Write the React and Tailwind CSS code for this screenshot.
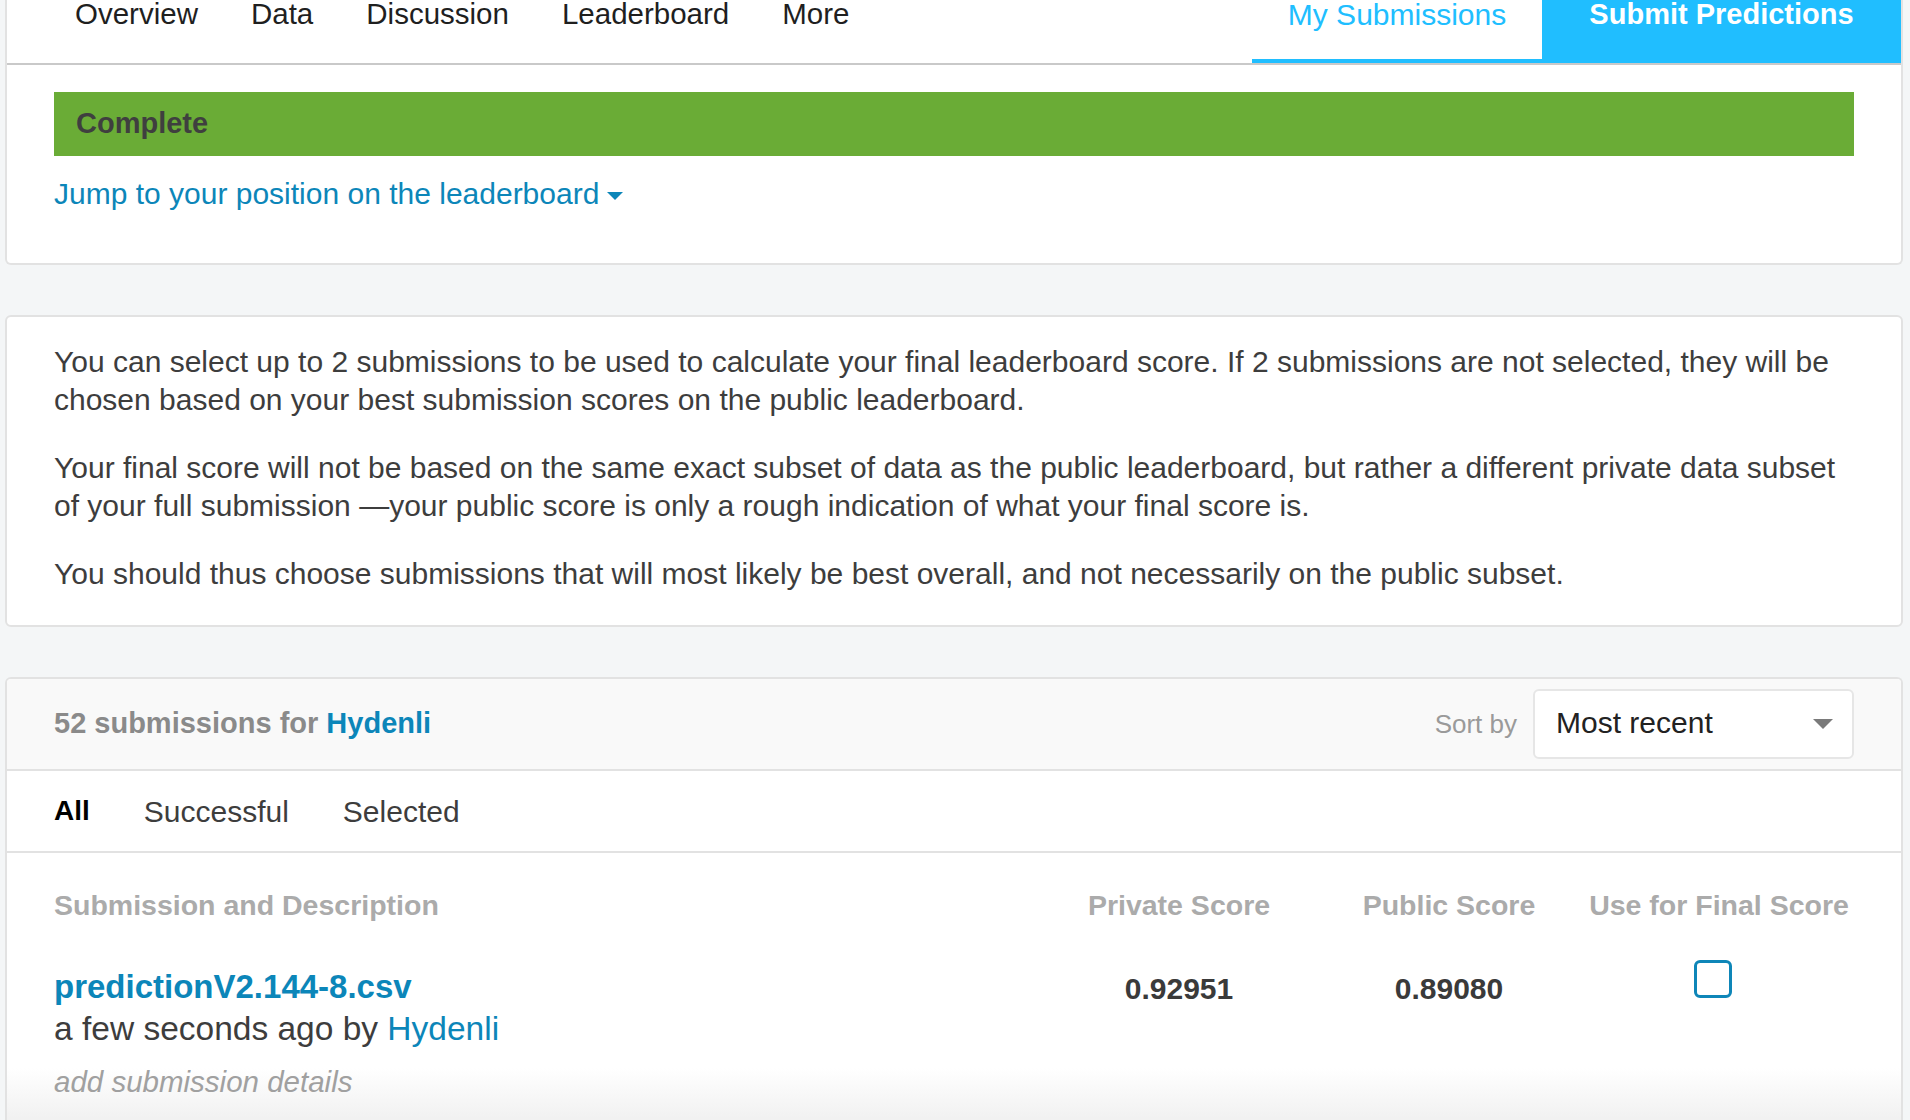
import { useState } from 'react';

const tabs = ['Overview', 'Data', 'Discussion', 'Leaderboard', 'More'];
const filters = ['All', 'Successful', 'Selected'];

function TopCard() {
    return (
        <div className="bg-white border-x-2 border-b-2 border-[#e2e2e2] rounded-b-[6px]">
            {/* Competition nav */}
            <div className="flex h-[65px] border-b-2 border-[#c9c9c9]">
                <div className="flex gap-[53px] pl-[68px] text-[29.5px] leading-[28px] text-[#1f1f1f]">
                    {tabs.map((t) => (
                        <span key={t}>{t}</span>
                    ))}
                </div>
                <div className="ml-auto flex h-[63px]">
                    <div className="w-[290px] flex justify-center border-b-4 border-[#20beff] text-[30px] leading-[30px] text-[#20beff]">
                        My Submissions
                    </div>
                    <div className="w-[359px] flex justify-center bg-[#20beff] text-[29px] leading-[28px] font-bold text-white">
                        <span>Submit Predictions</span>
                    </div>
                </div>
            </div>

            {/* Status */}
            <div className="px-[47px] pt-[27px] pb-[50px]">
                <div className="h-[64px] bg-[#6aac36] flex items-center pl-[22px]">
                    <span className="text-[29px] font-bold text-[#3f3f3f]">Complete</span>
                </div>
                <div className="mt-[19px] flex items-center text-[30px] leading-[38px] text-[#0c86b9]">
                    <span>Jump to your position on the leaderboard</span>
                    <svg width="16" height="8" viewBox="0 0 16 8" className="ml-[8px] mt-[3px]">
                        <path d="M0 0 L16 0 L8 8 Z" fill="#0c86b9" />
                    </svg>
                </div>
            </div>
        </div>
    );
}

function InfoCard() {
    return (
        <div className="mt-[50px] bg-white border-2 border-[#e2e2e2] rounded-[6px] px-[47px] pt-[26px] pb-[32px] text-[30px] leading-[38px] text-[#3d3d3d]">
            <p>
                You can select up to 2 submissions to be used to calculate your final leaderboard score. If 2 submissions are not selected, they will be chosen based on your best submission scores on the public leaderboard.
            </p>
            <p className="mt-[30px]">
                Your final score will not be based on the same exact subset of data as the public leaderboard, but rather a different private data subset of your full submission —your public score is only a rough indication of what your final score is.
            </p>
            <p className="mt-[30px]">
                You should thus choose submissions that will most likely be best overall, and not necessarily on the public subset.
            </p>
        </div>
    );
}

function SubmissionsCard() {
    const [filter, setFilter] = useState('All');
    const [selected, setSelected] = useState(false);

    return (
        <div className="mt-[50px] bg-white border-x-2 border-t-2 border-[#e2e2e2] rounded-t-[6px] overflow-hidden">
            {/* Header */}
            <div className="h-[92px] flex items-center px-[47px] bg-[#f9f9f9] border-b-2 border-[#e2e2e2]">
                <div className="text-[29px] font-bold">
                    <span className="text-[#8a8a8a]">52 submissions for </span>
                    <span className="text-[#0c86b9]">Hydenli</span>
                </div>
                <div className="ml-auto flex items-center">
                    <span className="text-[26px] text-[#9a9a9a] mr-[16px]">Sort by</span>
                    <div className="w-[321px] h-[70px] flex items-center justify-between bg-white border-2 border-[#e6e6e6] rounded-[6px] pl-[21px] pr-[19px]">
                        <span className="text-[30px] text-[#222] -mt-[3px]">Most recent</span>
                        <svg width="20" height="10" viewBox="0 0 20 10">
                            <path d="M0 0 L20 0 L10 10 Z" fill="#7a7a7a" />
                        </svg>
                    </div>
                </div>
            </div>

            {/* Filters */}
            <div className="h-[82px] flex items-center gap-[54px] px-[47px] border-b-2 border-[#e2e2e2] text-[30px]">
                {filters.map((f) => (
                    <button
                        key={f}
                        onClick={() => setFilter(f)}
                        className={f === filter ? 'font-bold text-[28px] text-black' : 'text-[#3d3d3d]'}
                    >
                        {f}
                    </button>
                ))}
            </div>

            {/* Table */}
            <div className="px-[47px] pt-[34px] pb-[20px] bg-[linear-gradient(to_bottom,#ffffff_80%,#f0f0f0)]">
                <div className="flex text-[28.5px] leading-[36px] font-bold text-[#ababab]">
                    <div className="flex-1">Submission and Description</div>
                    <div className="w-[270px] text-center">Private Score</div>
                    <div className="w-[270px] text-center">Public Score</div>
                    <div className="w-[270px] text-center">Use for Final Score</div>
                </div>

                <div className="flex items-start mt-[44px]">
                    <div className="flex-1">
                        <div className="text-[33px] leading-[40px] font-bold text-[#0c86b9]">predictionV2.144-8.csv</div>
                        <div className="mt-[2px] text-[33.5px] leading-[40px] text-[#3d3d3d]">
                            a few seconds ago by <span className="text-[#0c86b9]">Hydenli</span>
                        </div>
                        <div className="mt-[13px] text-[29.5px] leading-[40px] italic text-[#a0a0a0]">add submission details</div>
                    </div>
                    <div className="w-[270px] mt-[2px] text-center text-[30px] leading-[40px] font-bold text-[#3a3a3a]">0.92951</div>
                    <div className="w-[270px] mt-[2px] text-center text-[30px] leading-[40px] font-bold text-[#3a3a3a]">0.89080</div>
                    <div className="w-[270px] flex justify-center pr-[12px] -mt-[7px]">
                        <button
                            onClick={() => setSelected(!selected)}
                            className={`w-[38px] h-[38px] rounded-[6px] border-[3px] border-[#0e86b8] ${selected ? 'bg-[#0e86b8]' : 'bg-white'}`}
                        />
                    </div>
                </div>
            </div>
        </div>
    );
}

export default function App() {
    return (
        <div className="min-h-screen bg-[#f4f6f7] pl-[5px] pr-[7px] font-['Liberation_Sans',Arial,sans-serif]">
            <TopCard />
            <InfoCard />
            <SubmissionsCard />
        </div>
    );
}
